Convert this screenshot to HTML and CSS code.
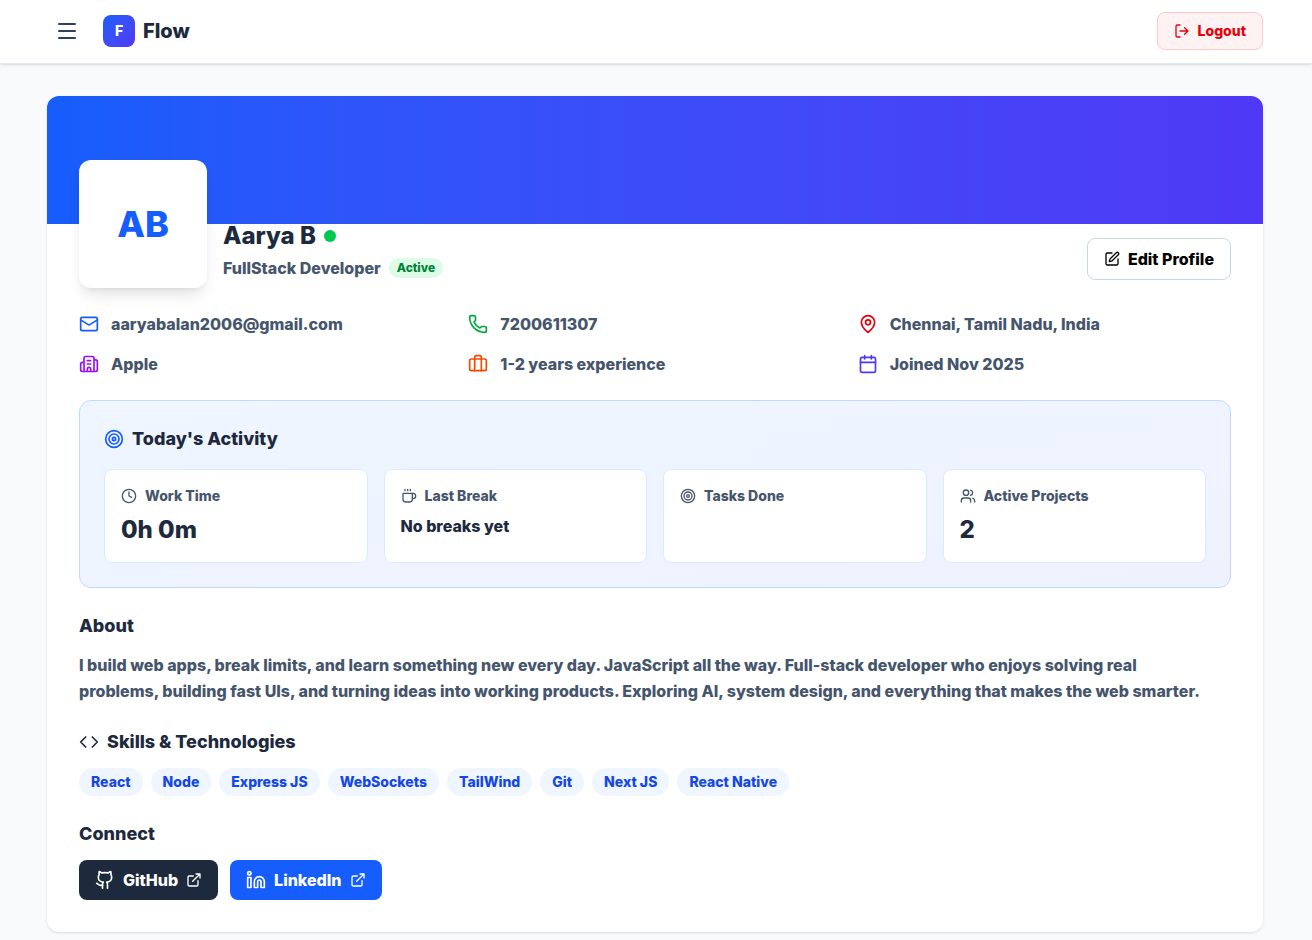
FILE: index.html
```html
<!DOCTYPE html>
<html lang="en">

<head>
    <meta charset="UTF-8">
    <meta name="viewport" content="width=device-width, initial-scale=1.0">
    <title>Flow</title>
    <link rel="stylesheet" href="styles.css">
</head>

<body>
    <svg class="sprite" aria-hidden="true">
        <symbol id="menu" viewBox="0 0 24 24"><path d="M4 5h16M4 12h16M4 19h16"/></symbol>
        <symbol id="logout" viewBox="0 0 24 24"><path d="m16 17 5-5-5-5M21 12H9M9 21H5a2 2 0 0 1-2-2V5a2 2 0 0 1 2-2h4"/></symbol>
        <symbol id="pen" viewBox="0 0 24 24"><path d="M12 3H5a2 2 0 0 0-2 2v14a2 2 0 0 0 2 2h14a2 2 0 0 0 2-2v-7"/><path d="M18.375 2.625a1 1 0 0 1 3 3l-9.013 9.014a2 2 0 0 1-.853.505l-2.873.84a.5.5 0 0 1-.62-.62l.84-2.873a2 2 0 0 1 .506-.852z"/></symbol>
        <symbol id="mail" viewBox="0 0 24 24"><path d="m22 7-8.991 5.727a2 2 0 0 1-2.009 0L2 7"/><rect x="2" y="4" width="20" height="16" rx="2"/></symbol>
        <symbol id="phone" viewBox="0 0 24 24"><path d="M13.832 16.568a1 1 0 0 0 1.213-.303l.355-.465A2 2 0 0 1 17 15h3a2 2 0 0 1 2 2v3a2 2 0 0 1-2 2A18 18 0 0 1 2 4a2 2 0 0 1 2-2h3a2 2 0 0 1 2 2v3a2 2 0 0 1-.8 1.6l-.468.351a1 1 0 0 0-.292 1.233 14 14 0 0 0 6.392 6.384"/></symbol>
        <symbol id="pin" viewBox="0 0 24 24"><path d="M20 10c0 4.993-5.539 10.193-7.399 11.799a1 1 0 0 1-1.202 0C9.539 20.193 4 14.993 4 10a8 8 0 0 1 16 0"/><circle cx="12" cy="10" r="3"/></symbol>
        <symbol id="building" viewBox="0 0 24 24"><path d="M10 12h4M10 8h4M14 21v-3a2 2 0 0 0-4 0v3M6 10H4a2 2 0 0 0-2 2v7a2 2 0 0 0 2 2h16a2 2 0 0 0 2-2V9a2 2 0 0 0-2-2h-2M6 21V5a2 2 0 0 1 2-2h8a2 2 0 0 1 2 2v16"/></symbol>
        <symbol id="briefcase" viewBox="0 0 24 24"><path d="M16 20V4a2 2 0 0 0-2-2h-4a2 2 0 0 0-2 2v16"/><rect x="2" y="6" width="20" height="14" rx="2"/></symbol>
        <symbol id="calendar" viewBox="0 0 24 24"><path d="M8 2v4M16 2v4M3 10h18"/><rect x="3" y="4" width="18" height="18" rx="2"/></symbol>
        <symbol id="target" viewBox="0 0 24 24"><circle cx="12" cy="12" r="10"/><circle cx="12" cy="12" r="6"/><circle cx="12" cy="12" r="2"/></symbol>
        <symbol id="clock" viewBox="0 0 24 24"><circle cx="12" cy="12" r="10"/><path d="M12 6v6l4 2"/></symbol>
        <symbol id="coffee" viewBox="0 0 24 24"><path d="M10 2v2M14 2v2M6 2v2M16 8a1 1 0 0 1 1 1v8a4 4 0 0 1-4 4H7a4 4 0 0 1-4-4V9a1 1 0 0 1 1-1h14a4 4 0 1 1 0 8h-1"/></symbol>
        <symbol id="users" viewBox="0 0 24 24"><path d="M16 21v-2a4 4 0 0 0-4-4H6a4 4 0 0 0-4 4v2M16 3.128a4 4 0 0 1 0 7.744M22 21v-2a4 4 0 0 0-3-3.87"/><circle cx="9" cy="7" r="4"/></symbol>
        <symbol id="code" viewBox="0 0 24 24"><path d="m16 18 6-6-6-6M8 6l-6 6 6 6"/></symbol>
        <symbol id="github" viewBox="0 0 24 24"><path d="M15 22v-4a4.8 4.8 0 0 0-1-3.5c3 0 6-2 6-5.5.08-1.25-.27-2.48-1-3.5.28-1.15.28-2.35 0-3.5 0 0-1 0-3 1.5-2.64-.5-5.36-.5-8 0C6 2 5 2 5 2c-.3 1.15-.3 2.35 0 3.5A5.403 5.403 0 0 0 4 9c0 3.5 3 5.5 6 5.5-.39.49-.68 1.05-.85 1.65-.17.6-.22 1.23-.15 1.85v4"/><path d="M9 18c-4.51 2-5-2-7-2"/></symbol>
        <symbol id="linkedin" viewBox="0 0 24 24"><path d="M16 8a6 6 0 0 1 6 6v7h-4v-7a2 2 0 0 0-2-2 2 2 0 0 0-2 2v7h-4v-7a6 6 0 0 1 6-6z"/><rect x="2" y="9" width="4" height="12"/><circle cx="4" cy="4" r="2"/></symbol>
        <symbol id="external" viewBox="0 0 24 24"><path d="M15 3h6v6M10 14 21 3M18 13v6a2 2 0 0 1-2 2H5a2 2 0 0 1-2-2V8a2 2 0 0 1 2-2h6"/></symbol>
    </svg>

    <header class="topbar">
        <div class="container topbar-inner">
            <div class="brand-group">
                <button class="menu-btn" type="button" aria-label="Menu"><svg class="icon icon-lg"><use href="#menu"/></svg></button>
                <div class="brand">
                    <span class="logo">F</span>
                    <span class="brand-name">Flow</span>
                </div>
            </div>
            <button class="logout" type="button"><svg class="icon"><use href="#logout"/></svg>Logout</button>
        </div>
    </header>

    <main class="container page">
        <section class="card">
            <div class="banner"></div>
            <div class="card-body">
                <div class="profile">
                    <div class="avatar">AB</div>
                    <div class="who">
                        <h1 class="name">Aarya B <span class="dot"></span></h1>
                        <p class="role">FullStack Developer <span class="status">Active</span></p>
                    </div>
                    <button class="edit" type="button"><svg class="icon"><use href="#pen"/></svg>Edit Profile</button>
                </div>

                <ul class="info">
                    <li><svg class="icon icon-md blue"><use href="#mail"/></svg>aaryabalan2006@gmail.com</li>
                    <li><svg class="icon icon-md green"><use href="#phone"/></svg>7200611307</li>
                    <li><svg class="icon icon-md red"><use href="#pin"/></svg>Chennai, Tamil Nadu, India</li>
                    <li><svg class="icon icon-md purple"><use href="#building"/></svg>Apple</li>
                    <li><svg class="icon icon-md orange"><use href="#briefcase"/></svg>1-2 years experience</li>
                    <li><svg class="icon icon-md indigo"><use href="#calendar"/></svg>Joined Nov 2025</li>
                </ul>

                <section class="activity">
                    <h2 class="title"><svg class="icon icon-md blue"><use href="#target"/></svg>Today's Activity</h2>
                    <div class="stats">
                        <div class="stat">
                            <h3 class="label"><svg class="icon"><use href="#clock"/></svg>Work Time</h3>
                            <p class="value">0h 0m</p>
                        </div>
                        <div class="stat">
                            <h3 class="label"><svg class="icon"><use href="#coffee"/></svg>Last Break</h3>
                            <p class="value-sm">No breaks yet</p>
                        </div>
                        <div class="stat">
                            <h3 class="label"><svg class="icon"><use href="#target"/></svg>Tasks Done</h3>
                        </div>
                        <div class="stat">
                            <h3 class="label"><svg class="icon"><use href="#users"/></svg>Active Projects</h3>
                            <p class="value">2</p>
                        </div>
                    </div>
                </section>

                <section class="block">
                    <h2 class="title">About</h2>
                    <p class="bio">I build web apps, break limits, and learn something new every day. JavaScript all the way. Full-stack developer who enjoys solving real problems, building fast UIs, and turning ideas into working products. Exploring AI, system design, and everything that makes the web smarter.</p>
                </section>

                <section class="block">
                    <h2 class="title"><svg class="icon icon-md"><use href="#code"/></svg>Skills &amp; Technologies</h2>
                    <ul class="tags">
                        <li>React</li>
                        <li>Node</li>
                        <li>Express JS</li>
                        <li>WebSockets</li>
                        <li>TailWind</li>
                        <li>Git</li>
                        <li>Next JS</li>
                        <li>React Native</li>
                    </ul>
                </section>

                <section class="block">
                    <h2 class="title">Connect</h2>
                    <div class="links">
                        <a class="link github" href="#"><svg class="icon icon-md"><use href="#github"/></svg>GitHub<svg class="icon"><use href="#external"/></svg></a>
                        <a class="link linkedin" href="#"><svg class="icon icon-md"><use href="#linkedin"/></svg>LinkedIn<svg class="icon"><use href="#external"/></svg></a>
                    </div>
                </section>
            </div>
        </section>
    </main>
</body>

</html>
```
FILE: styles.css
```css
* {
    box-sizing: border-box;
    margin: 0;
    padding: 0;
}

body {
    background-color: #f8fafc;
    color: #1d293d;
    font-family: Inter, "Liberation Sans", sans-serif;
    font-size: 16px;
    font-weight: 800;
    line-height: 24px;
}

h1,
h2,
h3 {
    font-weight: inherit;
}

button {
    font: inherit;
    cursor: pointer;
}

ul {
    list-style: none;
}

.sprite {
    display: none;
}

.icon {
    width: 16px;
    height: 16px;
    flex-shrink: 0;
    fill: none;
    stroke: currentColor;
    stroke-width: 2;
    stroke-linecap: round;
    stroke-linejoin: round;
}

.icon-md {
    width: 20px;
    height: 20px;
}

.icon-lg {
    width: 24px;
    height: 24px;
}

.container {
    max-width: 1280px;
    margin: 0 auto;
    padding: 0 33px 0 31px;
}

/* top bar */
.topbar {
    background-color: #fff;
    border-bottom: 1px solid #e2e8f0;
    box-shadow: 0 1px 3px rgba(0, 0, 0, 0.1), 0 1px 2px -1px rgba(0, 0, 0, 0.1);
}

.topbar-inner {
    display: flex;
    align-items: center;
    justify-content: space-between;
    padding-top: 11px;
    padding-bottom: 12px;
}

.brand-group {
    display: flex;
    align-items: center;
    gap: 16px;
}

.menu-btn {
    display: flex;
    padding: 8px;
    border: none;
    background: none;
    color: #314158;
}

.brand {
    display: flex;
    align-items: center;
    gap: 8px;
}

.logo {
    display: flex;
    align-items: center;
    justify-content: center;
    width: 32px;
    height: 32px;
    border-radius: 8px;
    background: linear-gradient(to bottom right in oklab, #155dfc, #4f39f6);
    color: #fff;
    font-size: 14px;
}

.brand-name {
    font-size: 20px;
    line-height: 28px;
}

.logout {
    display: flex;
    align-items: center;
    gap: 8px;
    padding: 8px 16px;
    border: 1px solid #ffc9c9;
    border-radius: 8px;
    background-color: #fef2f2;
    color: #e7000b;
    font-size: 14px;
    line-height: 20px;
}

/* profile card */
.page {
    padding-top: 32px;
    padding-bottom: 32px;
}

.card {
    border-radius: 12px;
    background-color: #fff;
    box-shadow: 0 1px 3px rgba(0, 0, 0, 0.1), 0 1px 2px -1px rgba(0, 0, 0, 0.1);
    overflow: hidden;
}

.banner {
    height: 128px;
    background: linear-gradient(to right in oklab, #155dfc, #4f39f6);
}

.card-body {
    padding: 0 32px 32px;
}

.profile {
    display: flex;
    align-items: flex-end;
    gap: 16px;
    margin-top: -64px;
    margin-bottom: 24px;
}

.avatar {
    display: flex;
    align-items: center;
    justify-content: center;
    width: 128px;
    height: 128px;
    border-radius: 12px;
    background-color: #fff;
    box-shadow: 0 10px 15px -3px rgba(0, 0, 0, 0.1), 0 4px 6px -4px rgba(0, 0, 0, 0.1);
    color: #155dfc;
    font-size: 36px;
}

.who {
    flex: 1;
    padding-bottom: 8px;
}

.name {
    display: flex;
    align-items: center;
    gap: 8px;
    margin-bottom: 4px;
    font-size: 24px;
    line-height: 32px;
}

.dot {
    width: 12px;
    height: 12px;
    border-radius: 50%;
    background-color: #00c950;
}

.role {
    display: flex;
    align-items: center;
    gap: 8px;
    color: #45556c;
}

.status {
    padding: 2px 8px;
    border-radius: 10px;
    background-color: #dcfce7;
    color: #008236;
    font-size: 12px;
    line-height: 16px;
}

.edit {
    display: flex;
    align-items: center;
    gap: 8px;
    margin-bottom: 8px;
    padding: 8px 16px;
    border: 1px solid #cad5e2;
    border-radius: 8px;
    background-color: #fff;
    color: #000;
}

.info {
    display: grid;
    grid-template-columns: repeat(3, 1fr);
    gap: 16px;
    margin-bottom: 24px;
    color: #45556c;
}

.info li {
    display: flex;
    align-items: center;
    gap: 12px;
}

.blue {
    color: #155dfc;
}

.green {
    color: #00a63e;
}

.red {
    color: #e7000b;
}

.purple {
    color: #9810fa;
}

.orange {
    color: #f54900;
}

.indigo {
    color: #4f39f6;
}

.title {
    display: flex;
    align-items: center;
    gap: 8px;
    margin-bottom: 12px;
    font-size: 18px;
    line-height: 28px;
}

/* today's activity */
.activity {
    padding: 24px;
    border: 1px solid #bedbff;
    border-radius: 12px;
    background: linear-gradient(to bottom right in oklab, #eff6ff, #eef2ff);
}

.activity .title {
    margin-bottom: 16px;
}

.stats {
    display: grid;
    grid-template-columns: repeat(4, 1fr);
    gap: 16px;
}

.stat {
    padding: 16px;
    border: 1px solid #dbeafe;
    border-radius: 8px;
    background-color: #fff;
}

.label {
    display: flex;
    align-items: center;
    gap: 8px;
    margin-bottom: 8px;
    color: #45556c;
    font-size: 14px;
    line-height: 20px;
}

.value {
    font-size: 24px;
    line-height: 32px;
}

.block {
    margin-top: 24px;
}

.bio {
    max-width: 1136px;
    color: #45556c;
    line-height: 26px;
}

.tags {
    display: flex;
    flex-wrap: wrap;
    gap: 8px;
}

.tags li {
    padding: 4px 12px;
    border-radius: 14px;
    background-color: #eff6ff;
    color: #1447e6;
    font-size: 14px;
    line-height: 20px;
}

.links {
    display: flex;
    gap: 12px;
}

.link {
    display: flex;
    align-items: center;
    gap: 8px;
    padding: 8px 16px;
    border-radius: 8px;
    color: #fff;
    text-decoration: none;
}

.github {
    background-color: #1d293d;
}

.linkedin {
    background-color: #155dfc;
}
```
